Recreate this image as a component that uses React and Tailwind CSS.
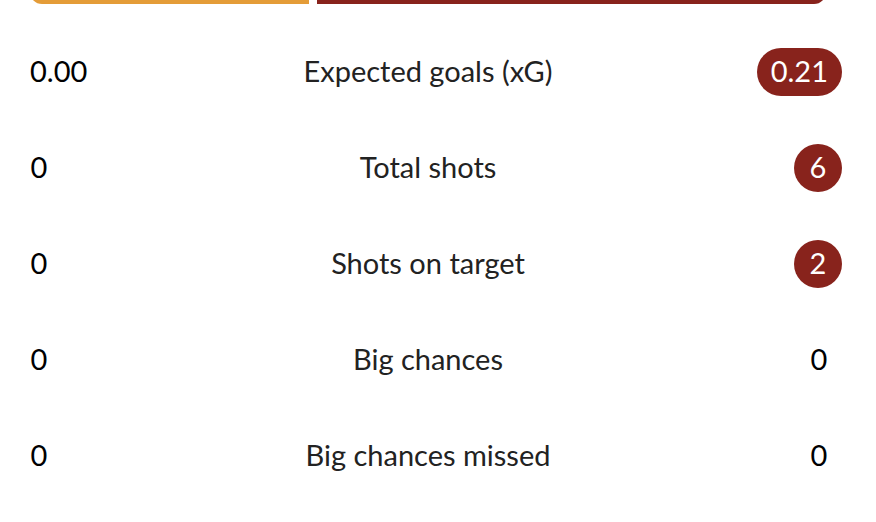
const rows = [
  { label: "Expected goals (xG)", home: "0.00", away: "0.21", win: "away" },
  { label: "Total shots", home: "0", away: "6", win: "away" },
  { label: "Shots on target", home: "0", away: "2", win: "away" },
  { label: "Big chances", home: "0", away: "0" },
  { label: "Big chances missed", home: "0", away: "0" },
];

function Value({ value, highlight }) {
  return (
    <span
      className={`inline-flex h-12 min-w-12 items-center justify-center rounded-full px-[14px] pb-[2px] ${
        highlight ? "bg-[#88231c] text-white" : "pl-4 text-black"
      }`}
    >
      {value}
    </span>
  );
}

export default function App() {
  return (
    <div
      className="h-[522px] w-[876px] overflow-hidden bg-white"
      style={{ fontFamily: "Lato, 'Open Sans', sans-serif" }}
    >
      {/* possession bar, only the bottom edge is in view */}
      <div className="-mt-[20px] flex h-6 gap-2 pl-[30px] pr-[50px]">
        <div className="w-[279px] rounded-l-[12px] bg-[#e49c38]" />
        <div className="flex-1 rounded-r-[12px] bg-[#88231c]" />
      </div>

      <div className="ml-[14px] mt-[44px] flex w-[828px] flex-col gap-12">
        {rows.map((r) => (
          <div key={r.label} className="flex h-12 items-center text-[29px]">
            <div className="flex flex-1 justify-start">
              <Value value={r.home} highlight={r.win === "home"} />
            </div>
            <div className="pb-[2px] text-[#222222]">{r.label}</div>
            <div className="flex flex-1 justify-end">
              <Value value={r.away} highlight={r.win === "away"} />
            </div>
          </div>
        ))}
      </div>
    </div>
  );
}
